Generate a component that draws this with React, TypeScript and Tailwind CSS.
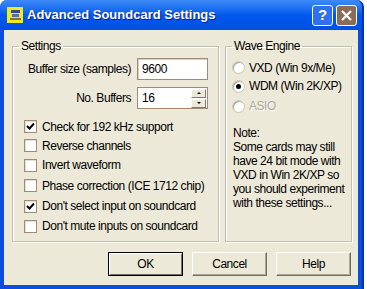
import React from "react";

const font = { fontFamily: '"Liberation Sans", Arial, sans-serif' };
const txt = "text-[12px] tracking-[-0.45px] whitespace-nowrap";
const groupBox =
  "h-[205px] border border-[#c4c0b0] shadow-[inset_1px_1px_0_#fff,1px_1px_0_#fff] p-0 m-0";

function CheckRow({ label, checked, h }: { label: string; checked?: boolean; h: string }) {
  return (
    <div className={`flex items-center ${h}`}>
      <span className="w-[13px] h-[13px] bg-white border border-[#a38a73] shadow-[inset_1px_1px_0_#e4ded6] flex items-center justify-center">
        {checked && (
          <svg width="9" height="9" viewBox="0 0 9 9">
            <path d="M1 4 L3.5 6.5 L8 1.5" stroke="#000" strokeWidth="2" fill="none" />
          </svg>
        )}
      </span>
      <span className={`ml-[5px] text-black ${txt}`}>{label}</span>
    </div>
  );
}

function Radio({ label, checked, disabled, h }: { label: string; checked?: boolean; disabled?: boolean; h: string }) {
  return (
    <div className={`flex items-center ${h}`}>
      <span className="w-[13px] h-[13px] rounded-full bg-white border border-[#c9c3b5] shadow-[inset_1px_1px_0_#aca899] flex items-center justify-center">
        {checked && <span className="w-[5px] h-[5px] rounded-full bg-black" />}
      </span>
      <span
        className={`ml-[4px] ${txt} ${disabled ? "text-[#aca899] [text-shadow:1px_1px_0_#fff]" : "text-black"}`}
      >
        {label}
      </span>
    </div>
  );
}

function Btn({ label, primary }: { label: string; primary?: boolean }) {
  return (
    <div
      className={`w-[75px] h-[24px] flex items-center justify-center text-black bg-[#ece9d8] ${txt} ${
        primary
          ? "border border-black shadow-[inset_1px_1px_0_#fff,inset_-1px_-1px_0_#716f64]"
          : "border-t border-l border-[#fff] border-r border-b border-r-[#716f64] border-b-[#716f64] shadow-[inset_-1px_-1px_0_#aca899]"
      }`}
    >
      {label}
    </div>
  );
}

export default function App() {
  return (
    <div className="w-[367px] h-[289px] bg-white overflow-hidden" style={font}>
      <div className="w-[364px] h-[289px] flex flex-col bg-[#0a4ee0] rounded-t-[7px] border-r-[2px] border-[#0832b0]">
        <div className="h-[30px] flex items-center pl-[7px] pr-[5px] bg-gradient-to-b from-[#3d8bf7] via-[#0058ee] to-[#0050e0] rounded-t-[7px]">
          <div className="w-[16px] h-[16px] bg-[#f5e81c] flex flex-col items-center justify-center gap-[1px]">
            <span className="w-[9px] h-[3px] bg-[#3a4a8a]" />
            <span className="w-[7px] h-[3px] bg-[#5070b0]" />
            <span className="w-[11px] h-[2px] bg-[#8a6a50]" />
          </div>
          <span className="ml-[4px] text-white font-bold text-[13px] [text-shadow:1px_1px_0_#0a1e80]">
            Advanced Soundcard Settings
          </span>
          <div className="ml-auto flex gap-[3px]">
            <div className="w-[21px] h-[21px] rounded-[3px] border border-white bg-[#2f6ff0] flex items-center justify-center text-white font-bold text-[15px]">
              ?
            </div>
            <div className="w-[21px] h-[21px] rounded-[3px] border border-white bg-[#8a6c58] flex items-center justify-center">
              <svg width="11" height="11" viewBox="0 0 11 11">
                <path d="M1 1 L10 10 M10 1 L1 10" stroke="#fff" strokeWidth="2.2" />
              </svg>
            </div>
          </div>
        </div>
        <div className="flex-1 mx-[4px] mb-[4px] bg-[#ece9d8] flex flex-col pt-[7px] pl-[8px] pr-[6px]">
          <div className="flex gap-[6px]">
            <fieldset className={`w-[207px] ${groupBox}`}>
              <legend className={`ml-[6px] px-[2px] text-black ${txt}`}>Settings</legend>
              <div className="pl-[11px] pr-[10px]">
                <div className="flex items-center justify-end h-[22px] mt-[3px]">
                  <span className={`mr-[6px] ${txt}`}>Buffer size (samples)</span>
                  <div className={`w-[71px] h-[22px] bg-white border border-[#a38a73] shadow-[inset_1px_1px_0_#d8d0c4] flex items-center pl-[4px] ${txt}`}>
                    9600
                  </div>
                </div>
                <div className="flex items-center justify-end h-[22px] mt-[7px]">
                  <span className={`mr-[6px] ${txt}`}>No. Buffers</span>
                  <div className={`w-[71px] h-[22px] bg-white border border-[#a38a73] flex items-center pl-[4px] ${txt}`}>
                    <span className="flex-1">16</span>
                    <div className="flex flex-col gap-[1px] mr-[1px]">
                      <div className="w-[15px] h-[9px] bg-[#ece9d8] border border-[#fff] border-r-[#8a7868] border-b-[#8a7868] flex items-center justify-center">
                        <span className="w-0 h-0 border-l-[2px] border-r-[2px] border-b-[2px] border-l-transparent border-r-transparent border-b-black" />
                      </div>
                      <div className="w-[15px] h-[9px] bg-[#ece9d8] border border-[#fff] border-r-[#8a7868] border-b-[#8a7868] flex items-center justify-center">
                        <span className="w-0 h-0 border-l-[2px] border-r-[2px] border-t-[2px] border-l-transparent border-r-transparent border-t-black" />
                      </div>
                    </div>
                  </div>
                </div>
                <div className="flex flex-col mt-[8px]">
                  <CheckRow label="Check for 192 kHz support" checked h="h-[19px]" />
                  <CheckRow label="Reverse channels" h="h-[19px]" />
                  <CheckRow label="Invert waveform" h="h-[20px]" />
                  <CheckRow label="Phase correction (ICE 1712 chip)" h="h-[21px]" />
                  <CheckRow label="Don't select input on soundcard" checked h="h-[20px]" />
                  <CheckRow label="Don't mute inputs on soundcard" h="h-[20px]" />
                </div>
              </div>
            </fieldset>
            <fieldset className={`flex-1 ${groupBox}`}>
              <legend className={`ml-[6px] px-[2px] text-black ${txt}`}>Wave Engine</legend>
              <div className="pl-[6px] pr-[6px]">
                <div className="flex flex-col mt-[4px]">
                  <Radio label="VXD (Win 9x/Me)" h="h-[17px]" />
                  <Radio label="WDM (Win 2K/XP)" checked h="h-[20px]" />
                  <Radio label="ASIO" disabled h="h-[20px]" />
                </div>
                <p className={`mt-[10px] leading-[14px] text-black ${txt} pl-[1px]`}>
                  Note:
                  <br />
                  Some cards may still
                  <br />
                  have 24 bit mode with
                  <br />
                  VXD in Win 2K/XP so
                  <br />
                  you should experiment
                  <br />
                  with these settings...
                </p>
              </div>
            </fieldset>
          </div>
          <div className="flex justify-end gap-[9px] mt-[10px] pr-[1px]">
            <Btn label="OK" primary />
            <Btn label="Cancel" />
            <Btn label="Help" />
          </div>
        </div>
      </div>
    </div>
  );
}
